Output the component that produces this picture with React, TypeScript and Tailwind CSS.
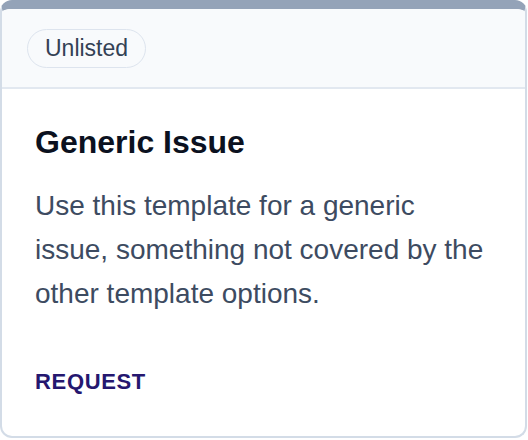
import React from 'react';

export default function App() {
    return (
        <div className="w-[528px] h-[440px] bg-white" style={{ fontFamily: '"Liberation Sans", Arial, sans-serif' }}>
            <div className="w-[527px] h-[438px] flex flex-col rounded-[12px] border-2 border-[#d3dce7] border-t-[9px] border-t-[#94a3b8] overflow-hidden bg-white">
                <div className="h-[80px] shrink-0 flex items-center px-[25px] bg-[#f8fafc] border-b-2 border-[#e2e8f0]">
                    <span className="h-[39px] flex items-center px-[17px] rounded-full border border-[#dde4ee] bg-[#f8fafc] text-[23px] text-[#334155]">
                        Unlisted
                    </span>
                </div>
                <div className="flex flex-col px-[33px] pt-[33px]">
                    <h1 className="text-[32px] leading-[40px] font-bold text-[#0b1120]">Generic Issue</h1>
                    <p className="mt-[22px] text-[28px] leading-[44px] text-[#3d4b61]">
                        Use this template for a generic issue, something not covered by the other template options.
                    </p>
                    <button className="mt-[52px] self-start text-[22px] leading-[28px] font-bold tracking-[0.03em] text-[#25176f]">
                        REQUEST
                    </button>
                </div>
            </div>
        </div>
    );
}
